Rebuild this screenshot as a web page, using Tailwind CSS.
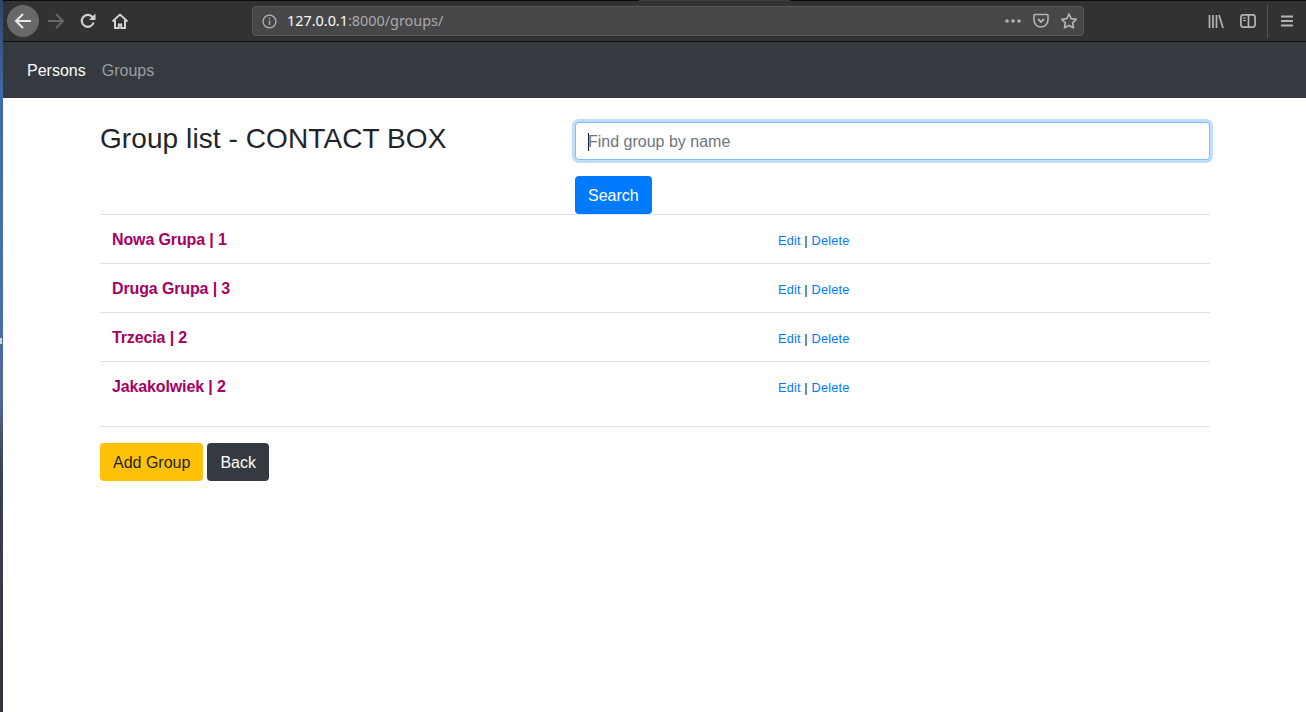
<!DOCTYPE html>
<html lang="en">
<head>
  <meta charset="UTF-8">
  <title>Group list - CONTACT BOX</title>
  <script src="https://cdn.jsdelivr.net/npm/@tailwindcss/browser@4"></script>
</head>
<body class="bg-white font-['Liberation_Sans',sans-serif] text-[#212529] overflow-hidden">
  <div class="flex h-[712px] w-[1306px]">
    <!-- desktop edge behind the window -->
    <div class="relative w-[3px] shrink-0 bg-[linear-gradient(to_bottom,#2f4468_0px,#3f6cae_100px,#4470b0_280px,#50689a_400px,#3a4150_470px,#30343e_712px)]">
      <div class="absolute left-0 top-[338px] h-[6px] w-[2px] bg-[#d8d8d8]"></div>
    </div>

    <div class="flex-1 flex flex-col min-w-0">
      <!-- browser toolbar -->
      <div class="h-[42px] shrink-0 bg-[#323234] border-b border-[#0c0c0d] flex flex-col">
        <div class="h-px flex items-stretch">
          <div class="w-[636px] bg-[#0c0c0d]"></div>
          <div class="w-[151px] bg-[#3d3d3f]"></div>
          <div class="flex-1 bg-[#0c0c0d]"></div>
        </div>
        <div class="flex-1 flex items-center pl-[4px] text-[#b4b4b6]">
          <div class="w-[32px] h-[32px] rounded-full bg-[#68686a] flex items-center justify-center text-[#e8e8e8]">
            <svg class="w-[18px] h-[18px]" viewBox="0 0 18 18" fill="none" stroke="currentColor" stroke-width="2"><path d="M17 9H2M9 2 2 9l7 7"/></svg>
          </div>
          <div class="w-[18px] h-[18px] ml-[8px] text-[#68686a]">
            <svg class="w-[18px] h-[18px]" viewBox="0 0 18 18" fill="none" stroke="currentColor" stroke-width="1.8"><path d="M1 9h15M9 2l7 7-7 7"/></svg>
          </div>
          <svg class="w-[16px] h-[16px] ml-[15px] text-[#d0d0d2]" viewBox="0 0 16 16" fill="none" stroke="currentColor" stroke-width="2.200"><path d="M13.6 9.5A6 6 0 1 1 12 3.6L14 5.6"/><path d="M15.500 .5v6.500H9" fill="currentColor" stroke="none"/></svg>
          <svg class="w-[18px] h-[18px] ml-[15px] text-[#d0d0d2]" viewBox="0 0 18 18" fill="none" stroke="currentColor" stroke-width="2"><path d="M1.500 9.500 9 2.500l7.500 7"/><path d="M4 8v8h3.800v-3.500h2.400V16H14V8"/></svg>

          <!-- address bar -->
          <div class="ml-[123px] w-[832px] h-[30px] rounded-[4px] bg-[#474749] border border-[#58585a] flex items-center pl-[9px] pr-[5px]">
            <svg class="w-[15px] h-[15px] text-[#b4b4b6]" viewBox="0 0 14 14" fill="none" stroke="currentColor" stroke-width="1.200"><circle cx="7" cy="7" r="6"/><path d="M7 6v4.200M7 3.400v1.400"/></svg>
            <span class="ml-[10px] font-['Noto_Sans',sans-serif] text-[14.400px] text-[#f9f9fa] whitespace-nowrap">127.0.0.1<span class="text-[#a9a9ab]">:8000/groups/</span></span>
            <div class="ml-auto flex items-center text-[#b4b4b6]">
              <svg class="w-[16px] h-[4px]" viewBox="0 0 16 4" fill="currentColor"><circle cx="2" cy="2" r="1.800"/><circle cx="8" cy="2" r="1.800"/><circle cx="14" cy="2" r="1.800"/></svg>
              <svg class="w-[16px] h-[16px] ml-[12px]" viewBox="0 0 16 16" fill="none" stroke="currentColor" stroke-width="1.600"><path d="M2 1.500h12a1 1 0 0 1 1 1V7a7 7 0 0 1-14 0V2.500a1 1 0 0 1 1-1Z"/><path d="m5 6 3 3 3-3" stroke-width="1.800"/></svg>
              <svg class="w-[18px] h-[18px] ml-[11px]" viewBox="0 0 18 18" fill="none" stroke="currentColor" stroke-width="1.700" stroke-linejoin="round"><path d="m9 2 2.200 4.600 5 .7-3.600 3.500.9 5L9 13.400 4.500 15.800l.9-5L1.800 7.300l5-.7Z"/></svg>
            </div>
          </div>

          <!-- right side toolbar buttons -->
          <svg class="w-[16px] h-[15px] ml-[124px]" viewBox="0 0 16 15" fill="none" stroke="currentColor" stroke-width="1.700"><path d="M1.500 1v13M5 1v13M8.500 1v13M11 1l4 13"/></svg>
          <svg class="w-[16px] h-[14px] ml-[16px]" viewBox="0 0 16 14" fill="none" stroke="currentColor" stroke-width="1.700"><rect x=".9" y=".9" width="14.200" height="12.200" rx="2.500"/><path d="M8.500 1v12"/><path d="M3 4h3M3 6.500h3" stroke-width="1.200"/></svg>
          <div class="w-px h-[34px] bg-[#555557] ml-[11px]"></div>
          <svg class="w-[14px] h-[12px] ml-[12px]" viewBox="0 0 14 12" fill="none" stroke="currentColor" stroke-width="1.800"><path d="M1 1.500h12M1 6h12M1 10.500h12"/></svg>
        </div>
      </div>

      <!-- navbar -->
      <nav class="h-[56px] shrink-0 bg-[#343a40] flex items-center pl-[24px] pt-[2px] gap-[16px] text-[16px]">
        <a class="text-white">Persons</a>
        <a class="text-white/50">Groups</a>
      </nav>

      <!-- content -->
      <main class="ml-[97px] w-[1110px]">
        <div class="flex h-[116px]">
          <h3 class="w-[475px] pt-[24px] text-[28px] leading-[33.600px] font-normal tracking-[0.085px]">Group list - CONTACT BOX</h3>
          <div class="flex-1 pt-[24px]">
            <div class="relative">
              <input type="text" placeholder="Find group by name" class="block w-full h-[38px] px-[12px] pt-[2px] text-[16px] rounded-[4px] bg-white border border-[#80bdff] shadow-[0_0_0_3px_rgba(0,123,255,0.25)] placeholder:text-[#6c757d] outline-none">
              <div class="absolute left-[13px] top-[11px] w-px h-[18px] bg-[#212529]"></div>
            </div>
            <button class="mt-[16px] h-[38px] px-[13px] pt-[2px] rounded-[4px] bg-[#007bff] text-white text-[16px]">Search</button>
          </div>
        </div>

        <div class="h-[49px] border-t border-[#dee2e6] flex items-center pl-[12px] pt-[2px]">
          <span class="w-[666px] font-bold text-[16px] tracking-[-0.13px] text-[#a70062]">Nowa Grupa | 1</span>
          <span class="text-[12.800px] tracking-[0.15px] mt-[2px]"><a class="text-[#007bff]">Edit</a> | <a class="text-[#007bff]">Delete</a></span>
        </div>
        <div class="h-[49px] border-t border-[#dee2e6] flex items-center pl-[12px] pt-[2px]">
          <span class="w-[666px] font-bold text-[16px] tracking-[-0.13px] text-[#a70062]">Druga Grupa | 3</span>
          <span class="text-[12.800px] tracking-[0.15px] mt-[2px]"><a class="text-[#007bff]">Edit</a> | <a class="text-[#007bff]">Delete</a></span>
        </div>
        <div class="h-[49px] border-t border-[#dee2e6] flex items-center pl-[12px] pt-[2px]">
          <span class="w-[666px] font-bold text-[16px] tracking-[-0.13px] text-[#a70062]">Trzecia | 2</span>
          <span class="text-[12.800px] tracking-[0.15px] mt-[2px]"><a class="text-[#007bff]">Edit</a> | <a class="text-[#007bff]">Delete</a></span>
        </div>
        <div class="h-[65px] border-t border-[#dee2e6] flex items-start pt-[13px] pl-[12px]">
          <span class="w-[666px] font-bold text-[16px] tracking-[-0.13px] text-[#a70062]">Jakakolwiek | 2</span>
          <span class="text-[12.800px] tracking-[0.15px] mt-[3px]"><a class="text-[#007bff]">Edit</a> | <a class="text-[#007bff]">Delete</a></span>
        </div>

        <div class="border-t border-[#dee2e6] pt-[16px] flex gap-[4px]">
          <button class="h-[38px] px-[13px] pt-[2px] rounded-[4px] bg-[#ffc107] text-[#212529] text-[16px]">Add Group</button>
          <button class="h-[38px] px-[13px] pt-[2px] rounded-[4px] bg-[#343a40] text-white text-[16px]">Back</button>
        </div>
      </main>
    </div>
  </div>
</body>
</html>
